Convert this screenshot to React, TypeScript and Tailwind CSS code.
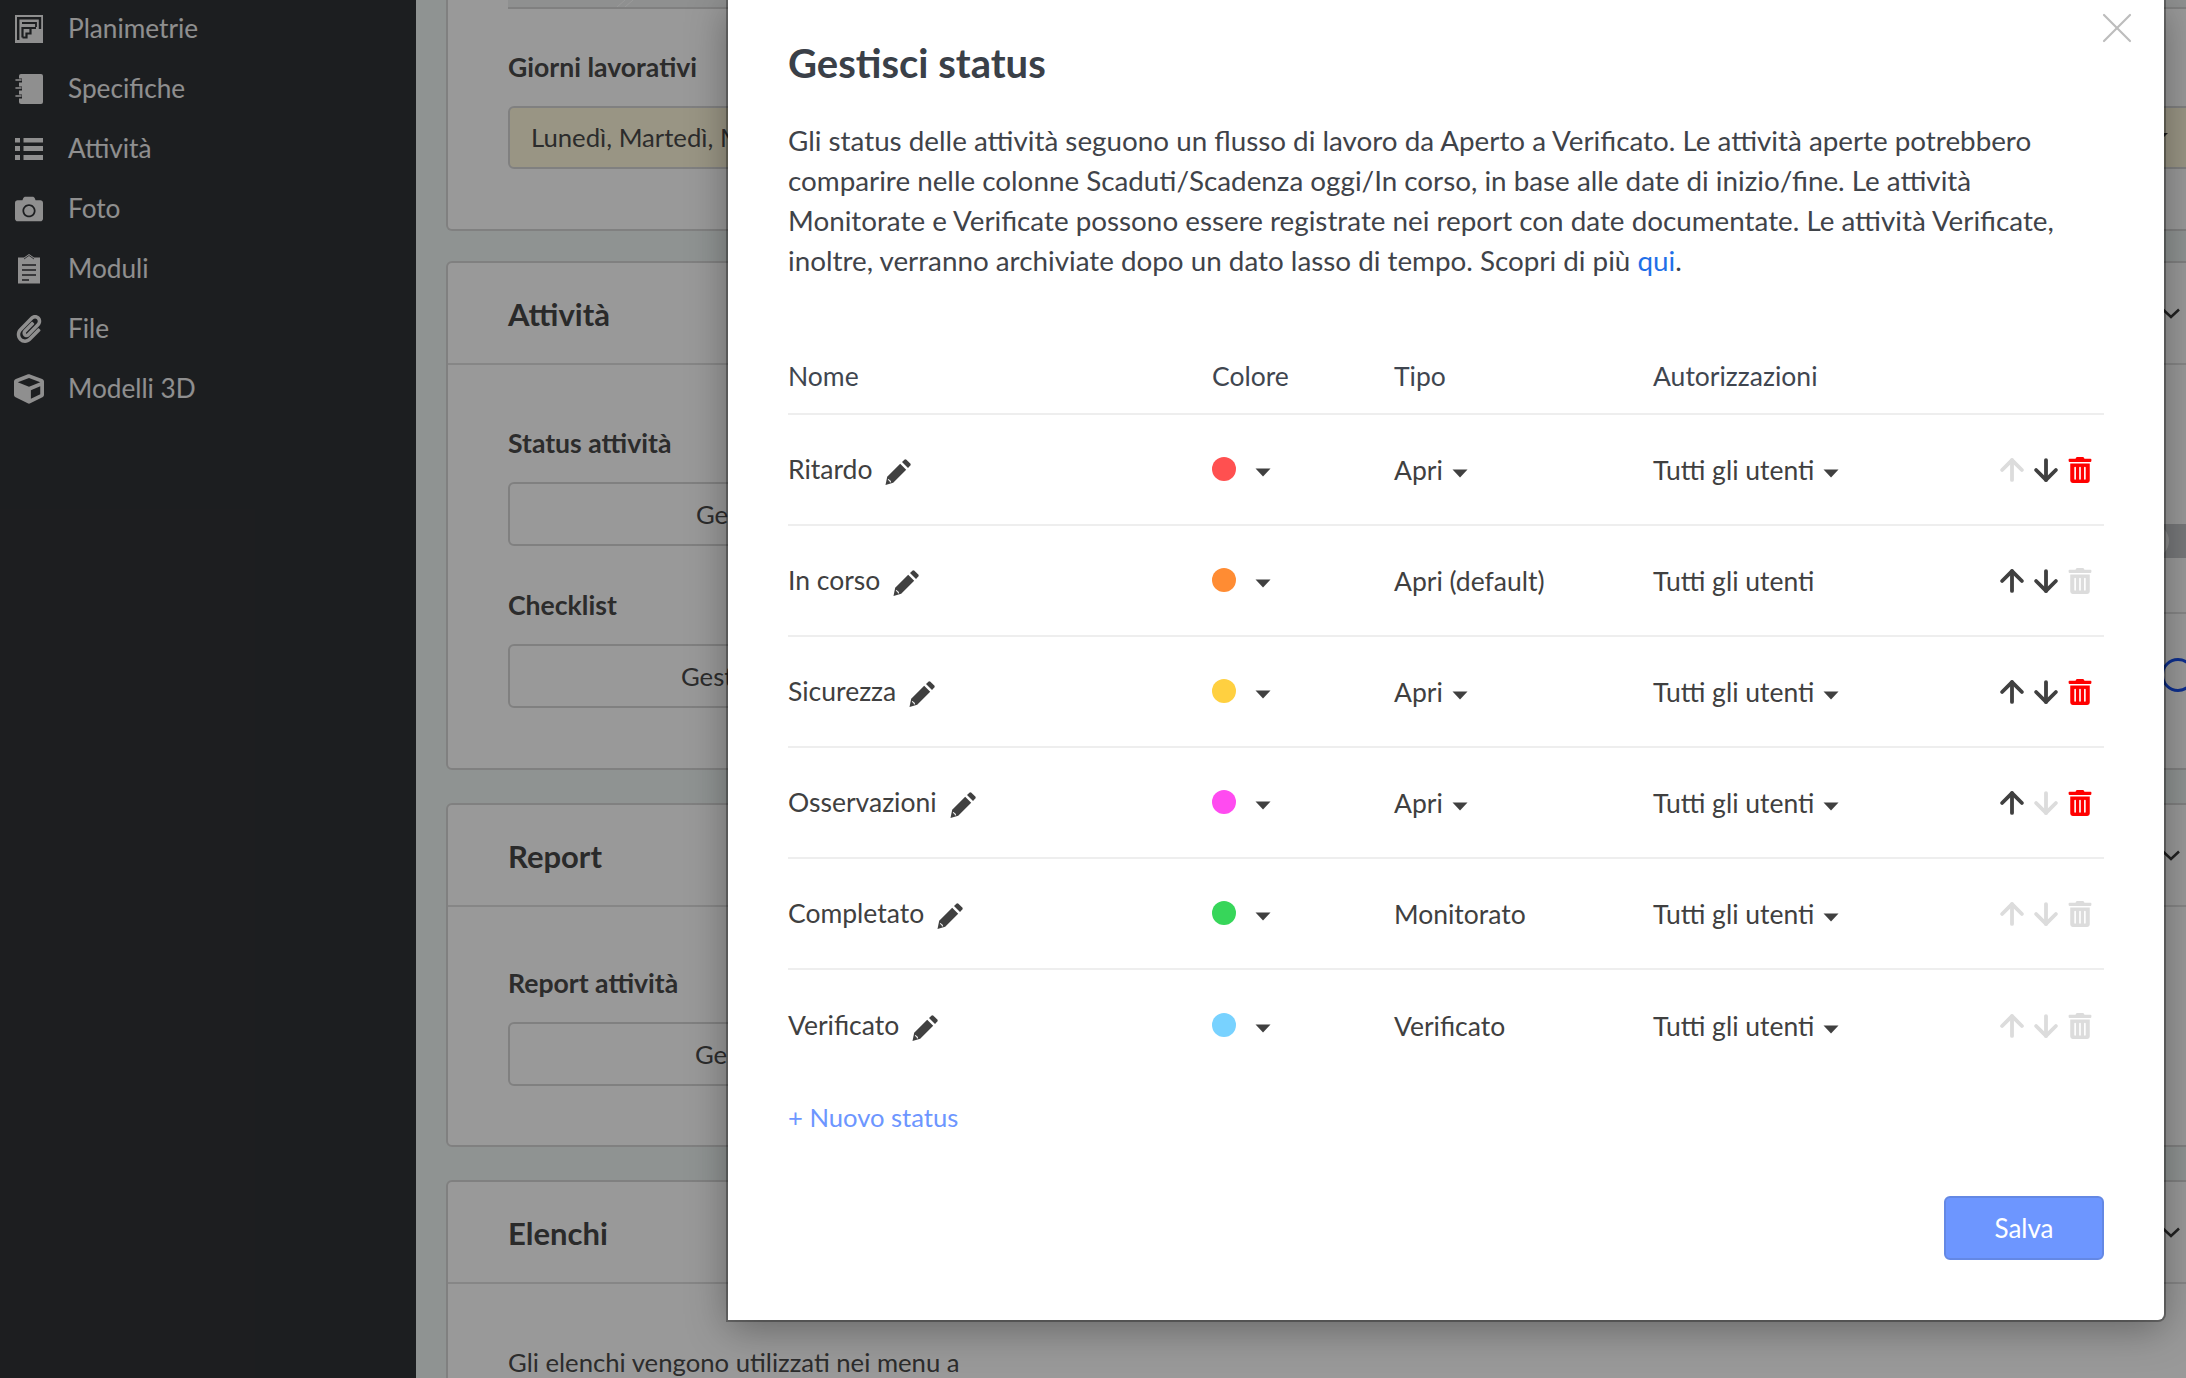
import { ArrowDown, ArrowUp, X } from "lucide-react";
import { FaCamera, FaCube, FaPaperclip, FaTrashAlt } from "react-icons/fa";

function FloorIcon() {
  return (
    <svg width="28" height="28" viewBox="0 0 28 28">
      <rect width="28" height="28" fill="#eeeeee" />
      <path d="M3.2 25V3.2H25V14" fill="none" stroke="#303236" strokeWidth="2.4" />
      <path d="M7 8H21V12" fill="none" stroke="#303236" strokeWidth="1.8" />
      <path d="M7.5 22.5V13H21M15.5 13V18.5H11.5V22.5H7.5" fill="none" stroke="#303236" strokeWidth="2.2" />
    </svg>
  );
}

function NotebookIcon() {
  return (
    <svg width="28" height="30" viewBox="0 0 28 30">
      <rect x="4" y="0" width="24" height="30" rx="2" fill="#eeeeee" />
      <path d="M1 6.5H7M1 14.5H7M1 22.5H7" stroke="#303236" strokeWidth="4" />
      <path d="M1 6H6M1 14H6M1 22H6" stroke="#eeeeee" strokeWidth="1.6" strokeLinecap="round" />
    </svg>
  );
}

function ListIcon() {
  return (
    <svg width="28" height="22" viewBox="0 0 28 22" fill="#eeeeee">
      <rect x="0" y="0" width="5" height="4.5" />
      <rect x="8.5" y="0" width="19.5" height="4.5" />
      <rect x="0" y="8" width="5" height="5" />
      <rect x="8.5" y="8" width="19.5" height="5" />
      <rect x="0" y="17" width="5" height="5" />
      <rect x="8.5" y="17" width="19.5" height="5" />
    </svg>
  );
}

function ClipboardIcon() {
  return (
    <svg width="22" height="30" viewBox="0 0 22 30">
      <path d="M0 3.5H6L11 0L16 3.5H22V29.5H0Z" fill="#eeeeee" />
      <path d="M4 11H18M4 16H18M4 21H18M4 26H11" stroke="#303236" strokeWidth="1.6" />
      <path d="M6 5L11 1.5L16 5" fill="none" stroke="#303236" strokeWidth="0.8" />
    </svg>
  );
}

function PencilIcon() {
  return (
    <svg width="26" height="26" viewBox="0 0 26 26" className="mt-[5px] shrink-0">
      <path d="M15.2 4.8L21.2 10.8L8.2 23.8L0.5 26L2.2 17.8Z" fill="#404040" />
      <path d="M3 20.5C4.5 20.8 5.4 21.8 5.6 23.4" fill="none" stroke="#ffffff" strokeWidth="1.2" />
      <path d="M17 3L19.4 0.7Q20.4 -0.1 21.4 0.7L25.3 4.6Q26.1 5.6 25.3 6.6L23 9Z" fill="#404040" />
    </svg>
  );
}

const navItems = [
  { label: "Planimetrie", icon: <FloorIcon /> },
  { label: "Specifiche", icon: <NotebookIcon /> },
  { label: "Attività", icon: <ListIcon /> },
  { label: "Foto", icon: <FaCamera size={28} color="#eeeeee" /> },
  { label: "Moduli", icon: <ClipboardIcon /> },
  { label: "File", icon: <FaPaperclip size={28} color="#eeeeee" /> },
  { label: "Modelli 3D", icon: <FaCube size={30} color="#eeeeee" /> },
];

const statuses = [
  { name: "Ritardo", color: "bg-[#ff5050]", type: "Apri", typeMenu: true, authMenu: true, up: false, down: true, trash: true },
  { name: "In corso", color: "bg-[#ff8c33]", type: "Apri (default)", typeMenu: false, authMenu: false, up: true, down: true, trash: false },
  { name: "Sicurezza", color: "bg-[#ffd040]", type: "Apri", typeMenu: true, authMenu: true, up: true, down: true, trash: true },
  { name: "Osservazioni", color: "bg-[#ff4bf0]", type: "Apri", typeMenu: true, authMenu: true, up: true, down: false, trash: true },
  { name: "Completato", color: "bg-[#37d65a]", type: "Monitorato", typeMenu: false, authMenu: true, up: false, down: false, trash: false },
  { name: "Verificato", color: "bg-[#78d2ff]", type: "Verificato", typeMenu: false, authMenu: true, up: false, down: false, trash: false },
];

function Caret() {
  return (
    <svg width="16" height="9" viewBox="0 0 16 9" className="mt-[6px] shrink-0">
      <path d="M0.5 0.5H15.5L8 8.5Z" fill="#404040" />
    </svg>
  );
}

function Chevron() {
  return (
    <svg width="18" height="11" viewBox="0 0 18 11">
      <path d="M1 1.5L9 9L17 1.5" fill="none" stroke="#383838" strokeWidth="2.5" />
    </svg>
  );
}

function Card({ title, children }: { title: string; children: React.ReactNode }) {
  return (
    <div className="w-[1800px] bg-white border-2 border-[#d6d6d6] rounded-md">
      <div className="h-[102px] flex items-center justify-between pl-[60px] pr-[64px] border-b-2 border-[#e0e0e0]">
        <h2 className="pt-[2px] text-[31px] font-bold text-[#474747]">{title}</h2>
        <Chevron />
      </div>
      {children}
    </div>
  );
}

function FieldLabel({ children }: { children: React.ReactNode }) {
  return <p className="text-[26.6px] leading-[36px] font-bold text-[#4a4a4a]">{children}</p>;
}

function GhostButton({ indent }: { indent: string }) {
  return (
    <div className={`mt-[21px] h-[64px] w-[1500px] border-2 border-[#d6d6d6] rounded-md flex items-center text-[25.7px] text-[#4a4a4a] ${indent}`}>
      Gestisci status
    </div>
  );
}

export default function App() {
  return (
    <div className="relative flex h-screen w-full overflow-hidden [font-family:Lato,sans-serif]">
      <aside className="w-[416px] shrink-0 bg-[#303236]">
        <nav className="-mt-[1px]">
          {navItems.map((item) => (
            <div key={item.label} className="h-[60px] flex items-center pl-[14px] text-[#eeeeee] text-[26.2px]">
              <span className="w-[30px] flex justify-center">{item.icon}</span>
              <span className="ml-[24px]">{item.label}</span>
            </div>
          ))}
        </nav>
      </aside>

      <main className="flex-1 min-w-0 overflow-hidden bg-[#eef5f3] pl-[30px]">
        <div className="w-[1800px] bg-white border-x-2 border-b-2 border-[#d6d6d6] rounded-b-md pl-[60px] pb-[60px]">
          <div className="h-[9px] border-b-2 border-[#d6d6d6] bg-[#eef0f0] pl-[109px]">
            <svg width="24" height="7" viewBox="0 0 24 7">
              <path d="M0 7L8 0M8 7L16 0" stroke="#ffffff" strokeWidth="1" />
            </svg>
          </div>
          <div className="mt-[40px]">
            <FieldLabel>Giorni lavorativi</FieldLabel>
          </div>
          <div className="mt-[21px] h-[63px] w-[1700px] border-2 border-[#d6d6d6] rounded-md bg-[#fff9dc] flex items-center justify-between pl-[21px] pr-[38px] text-[25.7px] text-[#4a4a4a]">
            <span>Lunedì, Martedì, Mercoledì, Giovedì, Venerdì</span>
            <svg width="20" height="10" viewBox="0 0 20 10">
              <path d="M0 0H20L10 10Z" fill="#383838" />
            </svg>
          </div>
        </div>

        <div className="mt-[30px]">
          <Card title="Attività">
            <div className="flex pl-[60px]">
              <div className="w-[1612px] pt-[60px] pb-[60px]">
                <FieldLabel>Status attività</FieldLabel>
                <GhostButton indent="pl-[186px]" />
                <div className="mt-[41px]">
                  <FieldLabel>Checklist</FieldLabel>
                </div>
                <GhostButton indent="pl-[171px]" />
              </div>
              <div className="flex-1">
                <div className="mt-[159px] ml-[13px] w-[70px] h-[34px] rounded-full bg-[#c6c8cb]">
                  <div className="w-[36px] h-[34px] rounded-full bg-[#eeeeee]" />
                </div>
                <div className="mt-[54px] border-t-2 border-[#e0e0e0]" />
                <div className="mt-[44px] ml-[41px] w-[34px] h-[34px] rounded-full border-[3px] border-[#164fee]" />
              </div>
            </div>
          </Card>
        </div>

        <div className="mt-[33px]">
          <Card title="Report">
            <div className="pl-[60px] pt-[58px] pb-[59px]">
              <FieldLabel>Report attività</FieldLabel>
              <GhostButton indent="pl-[185px]" />
            </div>
          </Card>
        </div>

        <div className="mt-[33px]">
          <Card title="Elenchi">
            <p className="pl-[60px] pt-[58px] text-[25.7px] leading-[40px] text-[#4a4a4a]">
              Gli elenchi vengono utilizzati nei menu a
            </p>
          </Card>
        </div>
      </main>

      <div className="absolute inset-0 bg-black/40" />

      <div className="absolute left-[728px] top-0 w-[1436px] h-[1320px] bg-white rounded-br-md px-[60px] text-[#404040] shadow-[0_0_0_2px_rgba(0,0,0,0.3),0_8px_40px_rgba(0,0,0,0.35)]">
        <X className="absolute right-[21px] top-[2px] text-[#bdbdbd]" size={52} strokeWidth={1} />

        <h1 className="pt-[40px] text-[40px] leading-[46px] font-bold text-[#3a4048]">Gestisci status</h1>

        <p className="mt-[35px] text-[27.8px] leading-[40px] text-[#3f4349]">
          Gli status delle attività seguono un flusso di lavoro da Aperto a Verificato. Le attività aperte potrebbero
          comparire nelle colonne Scaduti/Scadenza oggi/In corso, in base alle date di inizio/fine. Le attività
          Monitorate e Verificate possono essere registrate nei report con date documentate. Le attività Verificate,
          inoltre, verranno archiviate dopo un dato lasso di tempo. Scopri di più <span className="text-[#1f6fe8]">qui</span>.
        </p>

        <div className="mt-[58px] h-[76px] pt-[2px] grid grid-cols-[424px_182px_259px_1fr] items-center border-b-2 border-[#eeeeee] text-[26.5px] text-[#3f4650]">
          <span>Nome</span>
          <span>Colore</span>
          <span>Tipo</span>
          <span>Autorizzazioni</span>
        </div>

        {statuses.map((s, i) => (
          <div
            key={s.name}
            className={`h-[111px] grid grid-cols-[424px_182px_259px_1fr_auto] items-center text-[26.5px] ${i < statuses.length - 1 ? "border-b-2 border-[#eeeeee]" : ""}`}
          >
            <div className="flex items-center gap-[13px]">
              <span>{s.name}</span>
              <PencilIcon />
            </div>
            <div className="flex items-center gap-[19px]">
              <span className={`w-[24px] h-[24px] rounded-full mb-[2px] ${s.color}`} />
              <Caret />
            </div>
            <div className="flex items-center gap-[9px] pt-[2px]">
              <span>{s.type}</span>
              {s.typeMenu && <Caret />}
            </div>
            <div className="flex items-center gap-[9px] pt-[2px]">
              <span>Tutti gli utenti</span>
              {s.authMenu && <Caret />}
            </div>
            <div className="flex items-center pr-[11px]">
              <ArrowUp size={34} strokeWidth={2.7} color={s.up ? "#404040" : "#dcdcdc"} />
              <ArrowDown size={34} strokeWidth={2.7} color={s.down ? "#404040" : "#dcdcdc"} />
              <FaTrashAlt size={26} color={s.trash ? "#ff0000" : "#dcdcdc"} className="ml-[4px]" />
            </div>
          </div>
        ))}

        <p className="mt-[16px] text-[25.6px] leading-[40px] text-[#6d96ff]">+ Nuovo status</p>

        <div className="mt-[59px] flex justify-end">
          <button className="w-[160px] h-[64px] rounded-md bg-[#6d96ff] border-2 border-[#6488e4] text-white text-[26px]">
            Salva
          </button>
        </div>
      </div>
    </div>
  );
}
